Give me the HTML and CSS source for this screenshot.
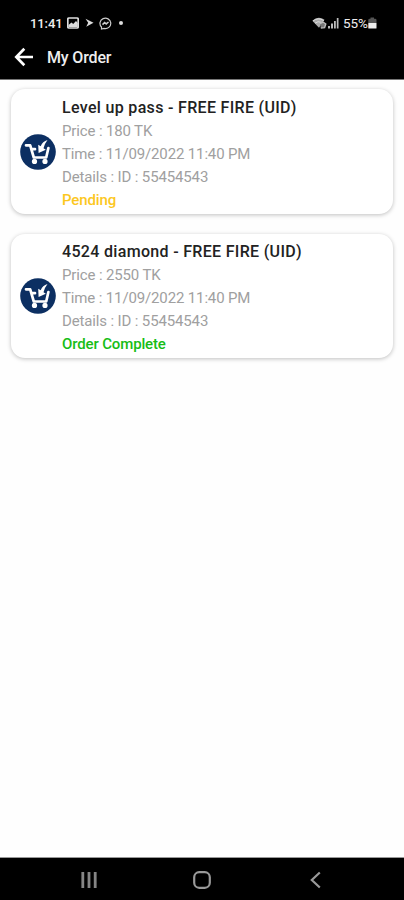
FILE: index.html
```html
<!doctype html>
<html lang="en">

<head>
	<title>My Order</title>
	<meta charset="UTF-8">
	<meta name="viewport" content="width=device-width, initial-scale=1">
	<link rel="stylesheet" href="styles.css">
</head>

<body>
	<header>
		<div class="status">
			<span class="clock">11:41</span>
			<svg class="picture" width="12" height="12" viewBox="0 0 12 12">
				<rect x="0.8" y="1" width="10.4" height="10" rx="1.2" fill="none" stroke="#ddd" stroke-width="1.7" />
				<path d="M1.5 10V8l3-2.5 1.7 1.4L9 4l1.8 2v4z" fill="#ddd" />
			</svg>
			<svg class="send" width="9" height="10" viewBox="0 0 9 10">
				<path d="M0.5 0.7L8.5 4.7 1.2 8.8 3.2 4.8z" fill="#ddd" />
			</svg>
			<svg class="chat" width="13" height="13" viewBox="0 0 13 13" fill="none" stroke="#ccc">
				<path d="M2.5 12V10A5.4 5.2 0 1 1 5 11.4z" stroke-width="1.2" />
				<path d="M3.5 7.6L5.6 5.5 7.2 6.9 9.5 5" stroke-width="1.5" />
			</svg>
			<span class="dot"></span>
			<div class="right">
				<svg width="15" height="12" viewBox="0 0 15 12">
					<path d="M0.3 3.8Q6 -1.8 12.5 2.7L7 10.8z" fill="#aaa" />
					<path d="M1 4Q6 0 11.8 3.5M3 6.2Q6 3.5 9.5 5.5" fill="none" stroke="#ddd" />
					<path d="M8 6.5l3-1.5 2.8 2-1.2 3.7-3.8 0.3" fill="#777" stroke="#bbb" stroke-width="1.4" />
				</svg>
				<svg class="signal" width="11" height="12" viewBox="0 0 11 12" fill="#bbb">
					<rect x="0" y="9" width="2" height="2.5" />
					<rect x="3" y="6.5" width="2" height="5" />
					<rect x="6" y="4" width="1.8" height="7.5" />
					<rect x="8.8" y="1" width="1.7" height="10.5" />
				</svg>
				<span class="percent">55%</span>
				<svg width="9" height="12" viewBox="0 0 9 12">
					<path d="M0.3 3Q0.3 1.8 1.8 1.8H2.5V0.6H6V1.8H7Q8.5 1.8 8.5 3V6.5H0.3z" fill="#555" />
					<rect x="0.3" y="6" width="8.2" height="5.5" rx="0.6" fill="#eee" />
				</svg>
			</div>
		</div>
		<div class="toolbar">
			<svg width="20" height="20" viewBox="0 0 20 20" fill="none" stroke="#fff" stroke-width="2.7">
				<path d="M19 10H2.8M10.3 1.8L2.3 10l8 8.2" />
			</svg>
			<h1>My Order</h1>
		</div>
	</header>

	<main>
		<div class="card">
			<svg class="logo" width="36" height="36" viewBox="0 0 36 36">
				<circle cx="18" cy="18" r="17.8" fill="#0c2f62" />
				<path d="M6 11.3h4.2l3.6 12.2h12.4l2.2-9.5M11.5 15.2h3.5" fill="none" stroke="#fff" stroke-width="2.7" stroke-linecap="round" stroke-linejoin="round" />
				<path d="M27.5 6Q22.5 7.5 20.7 12.2L18.2 10.8 18.6 19 25.8 15.8 23.5 14.3Q24.4 10 27.5 6z" fill="#fff" />
				<circle cx="14.5" cy="27.4" r="2.6" fill="#fff" />
				<circle cx="25" cy="27.4" r="2.6" fill="#fff" />
			</svg>
			<div class="info">
				<h2>Level up pass - FREE FIRE (UID)</h2>
				<p>Price : 180 TK</p>
				<p>Time : 11/09/2022 11:40 PM</p>
				<p>Details : ID : 55454543</p>
				<p class="pending">Pending</p>
			</div>
		</div>
		<div class="card">
			<svg class="logo" width="36" height="36" viewBox="0 0 36 36">
				<circle cx="18" cy="18" r="17.8" fill="#0c2f62" />
				<path d="M6 11.3h4.2l3.6 12.2h12.4l2.2-9.5M11.5 15.2h3.5" fill="none" stroke="#fff" stroke-width="2.7" stroke-linecap="round" stroke-linejoin="round" />
				<path d="M27.5 6Q22.5 7.5 20.7 12.2L18.2 10.8 18.6 19 25.8 15.8 23.5 14.3Q24.4 10 27.5 6z" fill="#fff" />
				<circle cx="14.5" cy="27.4" r="2.6" fill="#fff" />
				<circle cx="25" cy="27.4" r="2.6" fill="#fff" />
			</svg>
			<div class="info">
				<h2>4524 diamond - FREE FIRE (UID)</h2>
				<p>Price : 2550 TK</p>
				<p>Time : 11/09/2022 11:40 PM</p>
				<p>Details : ID : 55454543</p>
				<p class="complete">Order Complete</p>
			</div>
		</div>
	</main>

	<nav>
		<svg width="18" height="18" viewBox="0 0 18 18" fill="#858585">
			<rect x="1.4" y="1" width="2.8" height="16" />
			<rect x="7.6" y="1" width="2.8" height="16" />
			<rect x="13.8" y="1" width="2.8" height="16" />
		</svg>
		<svg width="18" height="18" viewBox="0 0 18 18">
			<rect x="1.2" y="1.2" width="15.6" height="15.6" rx="5" fill="none" stroke="#999" stroke-width="2.2" />
		</svg>
		<svg width="18" height="18" viewBox="0 0 18 18">
			<path d="M13.8 1.5L5.8 9l8 7.5" fill="none" stroke="#999" stroke-width="2.2" />
		</svg>
	</nav>
</body>

</html>
```

FILE: styles.css
```css
* {
	box-sizing: border-box;
}

body {
	margin: 0;
	height: 900px;
	display: flex;
	flex-direction: column;
	background: #fefefe;
	font-family: Roboto, "Liberation Sans", sans-serif;
}

h1,
h2,
p {
	margin: 0;
	white-space: nowrap;
}

header {
	height: 80px;
	background: #000;
	color: #eee;
	border-bottom: 1px solid #777;
}

.status {
	display: flex;
	align-items: center;
	height: 38px;
	padding: 8px 27px 0 30px;
	font-size: 13px;
	font-weight: 500;
}

.status svg {
	flex: none;
}

.clock {
	width: 37px;
	letter-spacing: -0.1px;
}

.send {
	margin: 0 5px 0 6px;
}

.dot {
	width: 4px;
	height: 4px;
	margin-left: 7px;
	border-radius: 50%;
	background: #ddd;
}

.right {
	display: flex;
	align-items: center;
	margin-left: auto;
}

.signal {
	margin-left: 1px;
}

.percent {
	margin-left: 4px;
	font-size: 13.5px;
	font-weight: 400;
	letter-spacing: 0;
}

.toolbar {
	display: flex;
	align-items: center;
	height: 38px;
	padding-left: 14px;
}

h1 {
	margin-left: 13px;
	font-size: 16px;
	font-weight: 500;
	letter-spacing: -0.15px;
}

main {
	flex: 1;
	display: flex;
	flex-direction: column;
	gap: 20px;
	padding: 9px 11px 0 11px;
}

.card {
	display: flex;
	align-items: center;
	height: 125px;
	padding-left: 9px;
	border-radius: 14px;
	background: #fff;
	box-shadow: 0 1px 4px rgba(0, 0, 0, 0.25);
}

.card + .card {
	height: 124px;
}

.logo {
	flex: none;
	margin-right: 6px;
}

.info {
	padding-top: 4px;
	line-height: 23px;
	font-size: 15px;
	letter-spacing: -0.14px;
	color: #a0a0a0;
}

h2 {
	line-height: 24px;
	font-size: 16px;
	font-weight: 500;
	letter-spacing: 0.32px;
	color: #222;
}

.pending,
.complete {
	font-weight: 500;
}

.pending {
	color: #fcc71f;
}

.complete {
	color: #16bd16;
}

nav {
	display: flex;
	align-items: center;
	justify-content: space-between;
	height: 43px;
	padding: 2px 80px 0 80px;
	background: #000;
	border-top: 1px solid #999;
}
```
